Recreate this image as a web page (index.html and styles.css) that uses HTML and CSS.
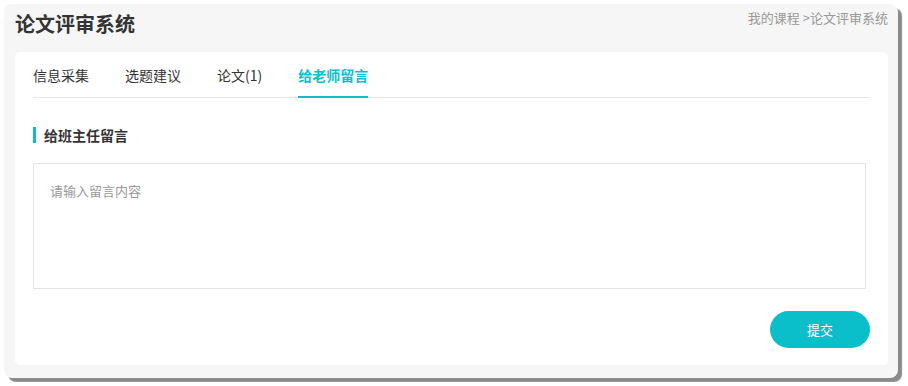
FILE: index.html
```html
<!DOCTYPE html>
<html lang="zh-CN">
<head>
    <meta charset="UTF-8">
    <title>论文评审系统</title>
    <link rel="stylesheet" href="styles.css">
</head>
<body>
    <div class="page">
        <!-- 头部 -->
        <div class="page-head">
            <h1 class="page-title">论文评审系统</h1>
            <div class="crumb">我的课程 &gt;论文评审系统</div>
        </div>

        <!-- 内容卡片 -->
        <div class="card">
            <div class="tabs">
                <div class="tab">信息采集</div>
                <div class="tab">选题建议</div>
                <div class="tab">论文(1)</div>
                <div class="tab active">给老师留言</div>
            </div>

            <div class="section-title">给班主任留言</div>

            <textarea class="msg-box" placeholder="请输入留言内容"></textarea>

            <div class="actions">
                <button class="submit-btn">提交</button>
            </div>
        </div>
    </div>
</body>
</html>
```

FILE: styles.css
```css
body {
    margin: 0;
    padding: 4px;
    background: #fff;
    font-family: "Noto Sans CJK SC", "Liberation Sans", sans-serif;
    color: #333;
}

.page {
    width: 894px;
    height: 374px;
    box-sizing: border-box;
    background: #f6f6f6;
    border-radius: 8px;
    box-shadow: 4px 4px 1px #8a8a8a;
    padding: 0 10px 0 11px;
}

/* 头部 */
.page-head {
    display: flex;
    justify-content: space-between;
    align-items: flex-start;
    height: 48px;
}
.page-title {
    margin: 5px 0 0;
    font-size: 20px;
    font-weight: 700;
    line-height: 30px;
    color: #333;
}
.crumb {
    margin-top: 5px;
    font-size: 13px;
    line-height: 18px;
    color: #999;
}

/* 卡片 */
.card {
    background: #fff;
    border-radius: 5px;
    height: 313px;
    box-sizing: border-box;
    padding: 0 18px 0 18px;
}

.tabs {
    display: flex;
    gap: 36px;
    height: 45px;
    border-bottom: 1px solid #e6e6ea;
}
.tab {
    font-size: 14px;
    line-height: 20px;
    padding-top: 13px;
    color: #333;
    box-sizing: border-box;
    height: 46px;
}
.tab.active {
    color: #0bbfca;
    font-weight: 700;
    border-bottom: 2px solid #0bbfca;
}

.section-title {
    margin-top: 29px;
    border-left: 3px solid #0bbfca;
    padding-left: 8px;
    font-size: 14px;
    font-weight: 700;
    line-height: 16px;
    color: #333;
}

.msg-box {
    display: block;
    margin-top: 20px;
    width: 833px;
    height: 126px;
    box-sizing: border-box;
    border: 1px solid #e4e4e4;
    padding: 17px 16px;
    resize: none;
    font-family: inherit;
    font-size: 13px;
    line-height: 20px;
    color: #333;
    outline: none;
}
.msg-box::placeholder {
    color: #999;
}

.actions {
    display: flex;
    justify-content: flex-end;
    margin-top: 22px;
}
.submit-btn {
    width: 100px;
    height: 37px;
    border: none;
    border-radius: 19px;
    background: #0abfca;
    color: #fff;
    font-family: inherit;
    font-size: 13px;
    cursor: pointer;
}
```
